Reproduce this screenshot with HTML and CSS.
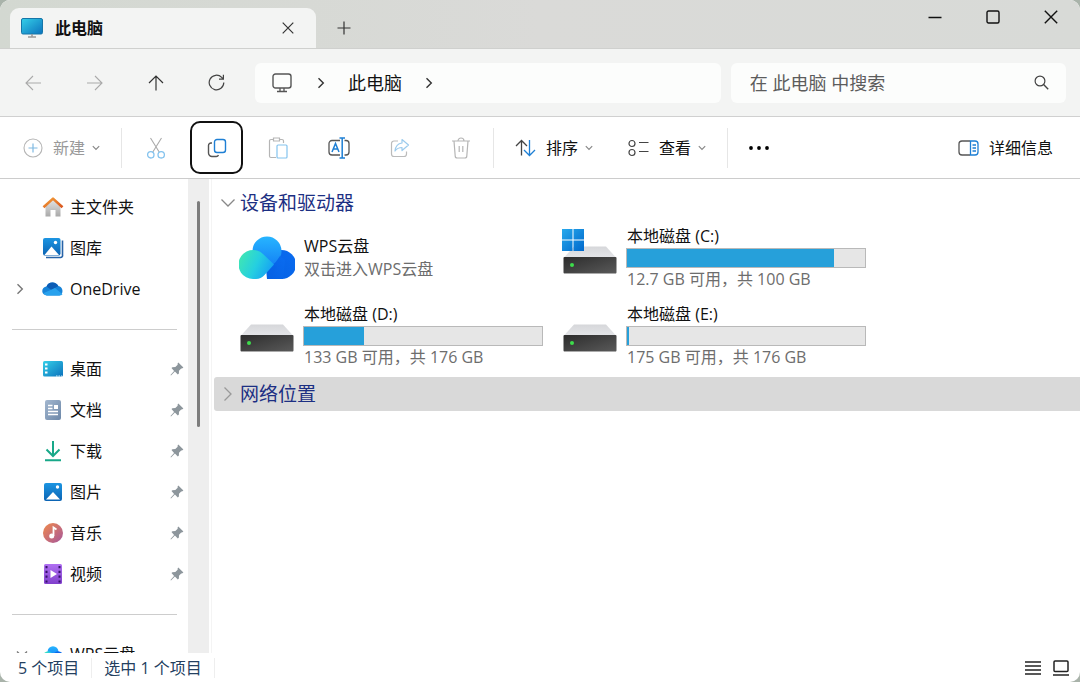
FILE: index.html
```html
<!DOCTYPE html>
<html lang="zh-CN">
<head>
<meta charset="utf-8">
<meta name="viewport" content="width=device-width, initial-scale=1">
<title>此电脑</title>
<link rel="stylesheet" href="styles.css">
</head>
<body>
<svg class="defs" aria-hidden="true">
  <defs>
    <linearGradient id="screen" x1="0" y1="0" x2="1" y2="1"><stop offset="0" stop-color="#35d0e8"/><stop offset="1" stop-color="#0c72bd"/></linearGradient>
    <linearGradient id="roof" x1="0" y1="0" x2="1" y2="1"><stop offset="0" stop-color="#f4a13a"/><stop offset="1" stop-color="#d9541e"/></linearGradient>
    <linearGradient id="wall" x1="0" y1="0" x2="0" y2="1"><stop offset="0" stop-color="#e6e6e6"/><stop offset="1" stop-color="#a9a9a9"/></linearGradient>
    <linearGradient id="photo" x1="0" y1="0" x2="0" y2="1"><stop offset="0" stop-color="#1c95e2"/><stop offset="1" stop-color="#0b63b3"/></linearGradient>
    <linearGradient id="paper" x1="0" y1="0" x2="1" y2="1"><stop offset="0" stop-color="#a3b7cf"/><stop offset="1" stop-color="#6c87a8"/></linearGradient>
    <linearGradient id="disc" x1="0" y1="0" x2="1" y2="1"><stop offset="0" stop-color="#f08a4b"/><stop offset="1" stop-color="#a6569c"/></linearGradient>
    <linearGradient id="film" x1="0" y1="0" x2="0" y2="1"><stop offset="0" stop-color="#b070f2"/><stop offset="1" stop-color="#8140cc"/></linearGradient>
    <linearGradient id="cloud-top" x1="0" y1="0" x2="0" y2="1"><stop offset="0" stop-color="#27b5ff"/><stop offset="1" stop-color="#1482f5"/></linearGradient>
    <linearGradient id="cloud-right" x1="1" y1="0" x2="0" y2="1"><stop offset="0" stop-color="#0a6cf0"/><stop offset="1" stop-color="#0560e4"/></linearGradient>
    <linearGradient id="cloud-left" x1="0" y1="0.3" x2="1" y2="0.7"><stop offset="0" stop-color="#3fe6b4"/><stop offset="0.500" stop-color="#25cfe0"/><stop offset="1" stop-color="#149cf6"/></linearGradient>
    <linearGradient id="drive-top" x1="0" y1="0" x2="0" y2="1"><stop offset="0" stop-color="#d6d7da"/><stop offset="1" stop-color="#e4e5e8"/></linearGradient>
    <linearGradient id="drive-front" x1="0" y1="0" x2="1" y2="1"><stop offset="0" stop-color="#2c2c2c"/><stop offset="1" stop-color="#5a5a5a"/></linearGradient>
    <linearGradient id="win" x1="0" y1="0" x2="1" y2="1"><stop offset="0" stop-color="#27a9ec"/><stop offset="1" stop-color="#0068cc"/></linearGradient>
    <symbol id="pin" viewBox="0 0 14 14"><path d="M8.3.6 13.4 5.6 12 6.6 11.2 6.4 9 8.8 8.9 11.6 7.8 12.4 4.9 9.6 1 13.4.5 13 4.1 8.9 1.5 6.1 2.4 5.2 5.3 5 7.7 2.8 7.5 1.7z" fill="#8d969c"/></symbol>
    <symbol id="chevron-down" viewBox="0 0 8 6"><path d="M.8 1.2 4 4.4 7.2 1.2" fill="none" stroke="currentColor" stroke-width="1.200"/></symbol>
    <symbol id="chevron-right" viewBox="0 0 8 12"><path d="M1.5 1.2 6.3 6 1.5 10.8" fill="none" stroke="currentColor" stroke-width="1.4"/></symbol>
    <symbol id="drive" viewBox="0 0 56 46"><path d="M12 17.500H44L54 28.500H2z" fill="url(#drive-top)"/><rect x="1.500" y="28" width="53" height="16.500" rx="1" fill="url(#drive-front)"/><path d="M2 44.500H54" stroke="#aaa"/><circle cx="10" cy="36" r="2" fill="#3ddc4b"/></symbol>
  </defs>
</svg>
<div class="window">
  <header class="titlebar">
    <div class="tab">
      <svg width="22" height="20" viewBox="0 0 22 20"><rect x=".5" y=".5" width="21" height="15.500" rx="1.500" fill="url(#screen)" stroke="#1676a8"/><path d="M11 16V18.500M7 19H15" stroke="#999" stroke-width="1.500"/></svg>
      <span class="tab-title">此电脑</span>
      <button class="tab-close" aria-label="关闭标签页"><svg width="12" height="12" viewBox="0 0 12 12"><path d="M.7.7 11.300 11.300M11.300.7.7 11.300" stroke="#333" stroke-width="1.200"/></svg></button>
    </div>
    <button class="tab-add" aria-label="新标签页"><svg width="14" height="14" viewBox="0 0 14 14"><path d="M7 .5V13.500M.5 7H13.500" stroke="#333" stroke-width="1.200"/></svg></button>
    <div class="window-controls">
      <button aria-label="最小化"><svg width="14" height="14" viewBox="0 0 14 14"><path d="M.5 7.500H13.500" stroke="#111" stroke-width="1.500"/></svg></button>
      <button aria-label="最大化"><svg width="14" height="14" viewBox="0 0 14 14"><rect x="1" y="1" width="12" height="12" rx="1.500" fill="none" stroke="#111" stroke-width="1.400"/></svg></button>
      <button aria-label="关闭"><svg width="14" height="14" viewBox="0 0 14 14"><path d="M.8.8 13.200 13.200M13.200.8.8 13.200" stroke="#111" stroke-width="1.400"/></svg></button>
    </div>
  </header>

  <nav class="navbar" aria-label="导航">
    <div class="nav-buttons">
      <button class="square" disabled aria-label="后退"><svg width="17" height="16" viewBox="0 0 17 16"><path d="M16 8H1.500M8 1 1 8 8 15" fill="none" stroke="#aaa" stroke-width="1.100"/></svg></button>
      <button class="square" disabled aria-label="前进"><svg width="17" height="16" viewBox="0 0 17 16"><path d="M1 8H15.500M9 1 16 8 9 15" fill="none" stroke="#aaa" stroke-width="1.100"/></svg></button>
      <button class="square" aria-label="向上"><svg width="16" height="16" viewBox="0 0 16 16"><path d="M8 15.500V1.500M1 8 8 1 15 8" fill="none" stroke="#333" stroke-width="1.200"/></svg></button>
      <button class="square" aria-label="刷新"><svg width="17" height="17" viewBox="0 0 17 17"><path d="M15.800 8.500A7.300 7.300 0 1 1 13.700 3.400L15.200 5M15.400.8V5.200H11" fill="none" stroke="#444" stroke-width="1.200"/></svg></button>
    </div>
    <div class="address">
      <svg width="20" height="20" viewBox="0 0 20 20"><rect x="1" y="1" width="18" height="14" rx="2.500" fill="none" stroke="#555" stroke-width="1.400"/><path d="M8 15V18M12 15V18M5 18.500H15" stroke="#555" stroke-width="1.300"/></svg>
      <svg class="crumb" width="8" height="12"><use href="#chevron-right"/></svg>
      <a class="crumb-link" href="#">此电脑</a>
      <svg class="crumb" width="8" height="12"><use href="#chevron-right"/></svg>
    </div>
    <label class="search">
      <input type="search" placeholder="在 此电脑 中搜索" aria-label="在 此电脑 中搜索">
      <svg width="15" height="15" viewBox="0 0 15 15"><circle cx="6" cy="6" r="4.900" fill="none" stroke="#444" stroke-width="1.200"/><path d="M9.600 9.600 14.200 14.200" stroke="#444" stroke-width="1.400"/></svg>
    </label>
  </nav>

  <div class="toolbar" role="toolbar" aria-label="命令">
    <button class="command muted" disabled>
      <svg width="20" height="20" viewBox="0 0 20 20" fill="none"><circle cx="10" cy="10" r="9" stroke="#b5b5b5" stroke-width="1.100"/><path d="M10 5.500V14.500M5.500 10H14.500" stroke="#7fb9e2" stroke-width="1.200"/></svg>
      <span>新建</span><svg class="drop" width="8" height="6"><use href="#chevron-down"/></svg>
    </button>
    <span class="separator"></span>
    <div class="icon-commands">
      <button class="square" disabled aria-label="剪切"><svg width="20" height="22" viewBox="0 0 20 22" fill="none"><path d="M4.500 1 13.200 15M15.500 1 6.800 15" stroke="#aaa" stroke-width="1.100"/><circle cx="4.800" cy="17.800" r="3.200" stroke="#84c3ee" stroke-width="1.300"/><circle cx="15.200" cy="17.800" r="3.200" stroke="#84c3ee" stroke-width="1.300"/></svg></button>
      <button class="square focused" aria-label="复制"><svg width="20" height="20" viewBox="0 0 20 20" fill="none"><rect x="7.500" y="1.500" width="11" height="13" rx="2.500" stroke="#1e7fd4" stroke-width="1.400"/><path d="M5 5H4A2.500 2.500 0 0 0 1.500 7.500V15A3.500 3.500 0 0 0 5 18.500H9A2.500 2.500 0 0 0 11.500 17" stroke="#555" stroke-width="1.400"/></svg></button>
      <button class="square" disabled aria-label="粘贴"><svg width="20" height="22" viewBox="0 0 20 22" fill="none"><path d="M8 20.500H3A1.500 1.500 0 0 1 1.500 19V4A1.500 1.500 0 0 1 3 2.500H5M12 2.500H14A1.500 1.500 0 0 1 15.500 4V6M5.500 1H11.500V4H5.500z" stroke="#b5b5b5" stroke-width="1.200"/><rect x="9" y="8" width="10" height="13" rx="1" stroke="#84c3ee" stroke-width="1.200"/></svg></button>
      <button class="square" aria-label="重命名"><svg width="22" height="22" viewBox="0 0 22 22" fill="none"><path d="M12 3.500H4A3 3 0 0 0 1 6.500V15A3 3 0 0 0 4 18H12M16.500 3.500H18A3 3 0 0 1 21 6.500V15A3 3 0 0 1 18 18H16.500" stroke="#555" stroke-width="1.300"/><path d="M4 15 7.500 6.500 11 15M5.300 12H9.700M14.200 1V21M11.500 1H17M11.500 21H17" stroke="#1e7fd4" stroke-width="1.500"/></svg></button>
      <button class="square" disabled aria-label="共享"><svg width="20" height="20" viewBox="0 0 20 20" fill="none"><path d="M8 3H4A2.500 2.500 0 0 0 1.500 5.500V16A2.500 2.500 0 0 0 4 18.500H14A2.500 2.500 0 0 0 16.500 16V13.500" stroke="#bbb" stroke-width="1.200"/><path d="M12 1.500 18.500 7 12 12.500V9.500C8.500 9.500 6.500 11 5 13 5.500 8.500 7.500 5.500 12 5z" stroke="#9ccbed" stroke-width="1.200" stroke-linejoin="round"/></svg></button>
      <button class="square" disabled aria-label="删除"><svg width="20" height="22" viewBox="0 0 20 22" fill="none" stroke="#b5b5b5" stroke-width="1.200"><path d="M1 4H19M7 4A3 3 0 0 1 13 4M3 4 4.200 19A2 2 0 0 0 6.200 21H13.800A2 2 0 0 0 15.800 19L17 4M8.200 9V15M11.800 9V15"/></svg></button>
    </div>
    <span class="separator"></span>
    <div class="text-commands">
      <button class="command">
        <svg width="21" height="18" viewBox="0 0 21 18" fill="none" stroke-width="1.300"><path d="M6.500 16.500V1.500M1 7 6.500 1.500 12 7" stroke="#444"/><path d="M14.500 1V16.500M9 11 14.500 16.500 20 11" stroke="#1e7fd4"/></svg>
        <span>排序</span><svg class="drop" width="8" height="6"><use href="#chevron-down"/></svg>
      </button>
      <button class="command">
        <svg width="21" height="18" viewBox="0 0 21 18" fill="none" stroke="#444" stroke-width="1.200"><circle cx="4" cy="4.500" r="3"/><circle cx="4" cy="13.500" r="3"/><path d="M11 3.500H20.500M11 12.500H20.500"/></svg>
        <span>查看</span><svg class="drop" width="8" height="6"><use href="#chevron-down"/></svg>
      </button>
    </div>
    <span class="separator"></span>
    <button class="more" aria-label="查看更多"><svg width="22" height="6" viewBox="0 0 22 6"><circle cx="3" cy="3" r="1.900"/><circle cx="11" cy="3" r="1.900"/><circle cx="19" cy="3" r="1.900"/></svg></button>
    <button class="command details">
      <svg width="21" height="16" viewBox="0 0 21 16" fill="none" stroke-width="1.300"><path d="M12 1H4A3 3 0 0 0 1 4V12A3 3 0 0 0 4 15H12" stroke="#555"/><path d="M12.500 1H17A3 3 0 0 1 20 4V12A3 3 0 0 1 17 15H12.500zM14.500 5H18M14.500 8H18M14.500 11H18" stroke="#1e7fd4"/></svg>
      <span>详细信息</span>
    </button>
  </div>

  <div class="content">
    <aside class="sidebar">
      <ul class="places">
        <li><a href="#"><svg class="icon" width="22" height="22" viewBox="0 0 22 22"><path d="M3.500 9 11 3 18.500 9V20.500H13.500V14H8.500V20.500H3.500z" fill="url(#wall)"/><path d="M1.500 11.200 11 2.600 20.500 11.200" fill="none" stroke="url(#roof)" stroke-width="2.600" stroke-linejoin="round"/></svg><span>主文件夹</span></a></li>
        <li><a href="#"><svg class="icon" width="22" height="22" viewBox="0 0 22 22"><path d="M20.500 3.500V18A2 2 0 0 1 18.500 20.500H4" fill="none" stroke="#2763a8" stroke-width="1.600"/><rect x="1" y="1" width="17.500" height="17.500" rx="2" fill="url(#photo)"/><path d="M2.500 18 9.500 9.500 17 18z" fill="#fff"/><circle cx="13.500" cy="5.500" r="1.700" fill="#fff"/></svg><span>图库</span></a></li>
        <li><a href="#"><svg class="expand" width="8" height="12"><use href="#chevron-right"/></svg><svg class="icon" width="22" height="16" viewBox="0 0 22 16"><path d="M5 14.500A4.500 4.500 0 0 1 4.500 5.500 6.500 6.500 0 0 1 16.300 5 5 5 0 0 1 17.500 14.500z" fill="#1683d8"/><path d="M4.500 5.500A6.500 6.500 0 0 1 16.300 5L9.500 9z" fill="#0c5cb5"/><path d="M5 14.500Q2.500 14.300 1.300 12.300L13 7 20.500 13.200Q19.500 14.400 17.500 14.500z" fill="#28a1ed"/></svg><span>OneDrive</span></a></li>
      </ul>
      <hr>
      <ul class="places">
        <li><a href="#"><svg class="icon" width="22" height="18" viewBox="0 0 22 18"><rect x="1" y="1" width="20" height="15.500" rx="1.500" fill="url(#screen)"/><path d="M3 4.500H5.500M3 8.500H5.500M3 12.500H5.500" stroke="#fff" stroke-width="1.800"/><path d="M14 16H20" stroke="#d5f4fa" stroke-dasharray="1.500 1"/></svg><span>桌面</span><svg class="pin" width="14" height="14"><use href="#pin"/></svg></a></li>
        <li><a href="#"><svg class="icon" width="22" height="22" viewBox="0 0 22 22"><rect x="3" y="1" width="16" height="20" rx="2" fill="url(#paper)"/><path d="M6 6.500H10.500M6 9.500H10.500M6 12.500H16M6 15.500H16" stroke="#fff" stroke-width="1.500"/><rect x="12" y="6" width="4" height="4" fill="#fff"/></svg><span>文档</span><svg class="pin" width="14" height="14"><use href="#pin"/></svg></a></li>
        <li><a href="#"><svg class="icon" width="22" height="22" viewBox="0 0 22 22"><path d="M11 1V16M4.500 9.500 11 16 17.500 9.500M3 20.200H19" fill="none" stroke="#18a889" stroke-width="2"/></svg><span>下载</span><svg class="pin" width="14" height="14"><use href="#pin"/></svg></a></li>
        <li><a href="#"><svg class="icon" width="22" height="20" viewBox="0 0 22 20"><rect x="2" y="1" width="18" height="18" rx="2" fill="url(#photo)"/><path d="M4 17.500 11 10 18 17.500z" fill="#fff"/><circle cx="15.500" cy="5" r="1.700" fill="#fff"/></svg><span>图片</span><svg class="pin" width="14" height="14"><use href="#pin"/></svg></a></li>
        <li><a href="#"><svg class="icon" width="22" height="22" viewBox="0 0 22 22"><circle cx="11" cy="11" r="10" fill="url(#disc)"/><path d="M11.500 14V5.500L14.500 7.500" fill="none" stroke="#fff" stroke-width="1.800"/><circle cx="9.700" cy="14" r="2.500" fill="#fff"/></svg><span>音乐</span><svg class="pin" width="14" height="14"><use href="#pin"/></svg></a></li>
        <li><a href="#"><svg class="icon" width="22" height="22" viewBox="0 0 22 22"><rect x="2" y="1" width="18" height="20" rx="1.500" fill="url(#film)"/><path d="M4.500 3V20M17.500 3V20" stroke="#35106b" stroke-width="2" stroke-dasharray="2.200 2.600"/><path d="M8.500 7 15 11 8.500 15z" fill="#fff"/></svg><span>视频</span><svg class="pin" width="14" height="14"><use href="#pin"/></svg></a></li>
      </ul>
      <hr>
      <ul class="places">
        <li><a href="#"><svg class="expand" width="12" height="8" viewBox="0 0 12 8"><path d="M1 1.500 6 6.500 11 1.500" fill="none" stroke="#777" stroke-width="1.400"/></svg><svg class="icon" width="22" height="16" viewBox="0 0 56 43"><circle cx="28" cy="15" r="14.500" fill="url(#cloud-top)"/><circle cx="42" cy="28" r="14" fill="url(#cloud-right)"/><circle cx="15" cy="28" r="14" fill="url(#cloud-left)"/></svg><span>WPS云盘</span></a></li>
      </ul>
    </aside>
    <div class="scroll-track"><div class="scroll-thumb"></div></div>

    <main class="main">
      <button class="group-header" aria-expanded="true"><svg width="16" height="10" viewBox="0 0 16 10"><path d="M1.500 1.500 8 8 14.500 1.500" fill="none" stroke="#888" stroke-width="1.300"/></svg><span>设备和驱动器</span></button>
      <div class="drives">
        <a class="drive" href="#">
          <svg width="56" height="46" viewBox="0 0 56 46"><g transform="translate(0 1)"><path d="M28 43H42.500A14 14 0 0 0 42.500 14Q34 14 26 23z" fill="url(#cloud-right)"/><circle cx="28" cy="15" r="14.500" fill="url(#cloud-top)"/><path d="M30 43 38 31 35 28.500 41 20 46 24 44 43z" fill="url(#cloud-right)"/><path d="M14 43A14.500 14.500 0 1 1 24 18L35 28.500 25.500 39Q22 43 17 43z" fill="url(#cloud-left)"/></g></svg>
          <span class="drive-info"><span class="drive-name">WPS云盘</span><span class="drive-note">双击进入WPS云盘</span></span>
        </a>
        <a class="drive" href="#">
          <svg class="drive-icon" width="56" height="46" viewBox="0 0 56 46"><use href="#drive"/><path d="M0 0H10.500V10.500H0zM11.500 0H22V10.500H11.500zM0 11.500H10.500V22H0zM11.500 11.500H22V22H11.500z" fill="url(#win)"/></svg>
          <span class="drive-info"><span class="drive-name">本地磁盘 (C:)</span><span class="bar"><span class="bar-fill" style="width:87%"></span></span><span class="drive-note">12.7 GB 可用，共 100 GB</span></span>
        </a>
        <a class="drive" href="#">
          <svg class="drive-icon" width="56" height="46"><use href="#drive"/></svg>
          <span class="drive-info"><span class="drive-name">本地磁盘 (D:)</span><span class="bar"><span class="bar-fill" style="width:25%"></span></span><span class="drive-note">133 GB 可用，共 176 GB</span></span>
        </a>
        <a class="drive" href="#">
          <svg class="drive-icon" width="56" height="46"><use href="#drive"/></svg>
          <span class="drive-info"><span class="drive-name">本地磁盘 (E:)</span><span class="bar"><span class="bar-fill" style="width:0.6%"></span></span><span class="drive-note">175 GB 可用，共 176 GB</span></span>
        </a>
      </div>
      <button class="group-header selected" aria-expanded="false"><svg width="16" height="16" viewBox="0 0 16 16"><path d="M4.500 1.500 11 8 4.500 14.500" fill="none" stroke="#999" stroke-width="1.300"/></svg><span>网络位置</span></button>
    </main>
  </div>

  <footer class="statusbar">
    <span>5 个项目</span>
    <span class="status-separator"></span>
    <span>选中 1 个项目</span>
    <span class="status-separator"></span>
    <div class="view-modes">
      <button aria-label="详细信息视图"><svg width="16" height="16" viewBox="0 0 16 16"><path d="M0 2H16M0 6H16M0 10H16M0 14H16" stroke="#222" stroke-width="1.400"/></svg></button>
      <button aria-label="大图标视图"><svg width="16" height="16" viewBox="0 0 16 16"><rect x="1" y="1" width="14" height="10.500" rx="1" fill="none" stroke="#222" stroke-width="1.500"/><path d="M0 15H16" stroke="#222" stroke-width="1.600"/></svg></button>
    </div>
  </footer>
</div>
</body>
</html>
```
FILE: styles.css
```css
* { box-sizing: border-box; }

body {
  margin: 0;
  background: #a9b3aa;
  color: #111;
  font: 16px/24px "Open Sans", "Noto Sans CJK SC", sans-serif;
}

button {
  display: flex;
  align-items: center;
  justify-content: center;
  padding: 0;
  border: 0;
  background: none;
  color: inherit;
  font: inherit;
}

a { color: inherit; text-decoration: none; }
svg { flex: none; display: block; }
.defs { position: absolute; width: 0; height: 0; }

.window {
  display: flex;
  flex-direction: column;
  height: 100vh;
  overflow: hidden;
  border-radius: 10px;
  background: #fff;
}

/* Title bar */
.titlebar {
  display: flex;
  flex: none;
  height: 49px;
  padding-left: 10px;
  border-bottom: 1px solid #cfd0ce;
  background: linear-gradient(90deg, #d3d8d1, #dadad8 50%, #d8dad7);
}
.tab {
  display: flex;
  align-items: center;
  width: 306px;
  margin-top: 8px;
  padding: 0 22px 0 11px;
  border-radius: 9px 9px 0 0;
  background: #f3f4f3;
}
.tab-title { margin-left: 12px; font-weight: 700; }
.tab-close { margin-left: auto; }
.tab-add { width: 28px; margin: 8px 0 0 14px; }
.window-controls { display: flex; margin-left: auto; }
.window-controls button { width: 58px; height: 33px; }

/* Navigation */
.navbar {
  display: flex;
  flex: none;
  align-items: center;
  height: 68px;
  padding: 0 14px 0 7px;
  border-bottom: 1px solid #d0d0d0;
  background: #f3f4f3;
  font-size: 18px;
}
.nav-buttons, .icon-commands { display: flex; gap: 8px; }
.square { width: 53px; height: 53px; border-radius: 10px; }
.address, .search {
  display: flex;
  align-items: center;
  height: 40px;
  border-radius: 6px;
  background: #fcfdfc;
}
.address { flex: 3 1 0; margin-left: 12px; padding-left: 17px; }
.crumb { margin-left: 25px; color: #333; }
.crumb-link { margin-left: 23px; }
.crumb-link + .crumb { margin-left: 23px; }
.search { flex: 2 1 0; margin-left: 10px; padding: 0 17px 0 19px; }
.search input {
  flex: 1;
  min-width: 0;
  padding: 0;
  border: 0;
  outline: 0;
  background: none;
  font: inherit;
}
.search input::placeholder { color: #5c5c5c; opacity: 1; }

/* Commands */
.toolbar {
  display: flex;
  flex: none;
  align-items: center;
  height: 62px;
  padding: 0 27px 0 23px;
  border-bottom: 1px solid #ccc;
}
.command span { margin-left: 10px; }
.muted { color: #999; }
.drop { margin-left: 7px; color: #888; }
.separator { width: 1px; height: 40px; margin-left: 21px; background: #e6e6e6; }
.icon-commands { margin-left: 7px; }
.icon-commands + .separator { margin-left: 6px; }
.focused { border: 2px solid #111; }
.text-commands { display: flex; gap: 35px; margin-left: 21px; }
.more { margin-left: 20px; }
.details { margin-left: auto; }

/* Body */
.content { display: flex; flex: 1; min-height: 0; }
.sidebar { width: 188px; flex: none; overflow: hidden; padding-top: 7px; }
.places { margin: 0; padding: 0; list-style: none; }
.places a {
  display: grid;
  grid-template-columns: 12px 22px 1fr 14px;
  align-items: center;
  height: 41px;
  padding: 0 4px 0 16px;
}
.places .expand { grid-column: 1; grid-row: 1; color: #777; }
.places .icon { grid-column: 2; grid-row: 1; margin-left: 14px; }
.places span { grid-column: 3; grid-row: 1; margin-left: 20px; }
.places .pin { grid-column: 4; grid-row: 1; }
.sidebar hr {
  height: 1px;
  margin: 20px 11px 18px 12px;
  border: 0;
  background: #cdcdcd;
}
.scroll-track {
  flex: none;
  width: 21px;
  padding: 22px 9px 0;
  background: #eee;
}
.scroll-thumb { width: 3px; height: 226px; border-radius: 2px; background: #7d7d7d; }

.main {
  flex: 1;
  min-width: 0;
  margin-left: 2px;
  padding: 8px 0 0 2px;
  border-left: 1px solid #f4f4f4;
}
.group-header {
  justify-content: flex-start;
  gap: 4px;
  width: 100%;
  height: 32px;
  padding-left: 6px;
  color: #1c2f83;
  font-size: 19px;
}
.selected { height: 34px; margin-top: 2px; border-radius: 3px 0 0 3px; background: #d9d9d9; }
.drives {
  display: grid;
  grid-template-columns: repeat(auto-fill, 304px);
  gap: 0 19px;
  max-width: 660px;
  padding-left: 25px;
}
.drive { display: flex; gap: 8px; align-items: center; height: 78px; }
.drive-icon { margin-bottom: 12px; }
.drive-info { display: flex; flex: 1; flex-direction: column; }
.drive-name, .drive-note { padding-left: 1px; line-height: 23px; }
.drive-note { color: #6d6d6d; }
.bar { height: 20px; border: 1px solid #b9b9b9; background: #e6e6e6; }
.bar-fill { display: block; min-width: 2px; height: 100%; background: #26a0da; }

/* Status */
.statusbar {
  display: flex;
  flex: none;
  align-items: center;
  height: 29px;
  padding: 0 11px 0 18px;
  color: #24405f;
}
.status-separator { width: 1px; height: 20px; margin: 0 12px; background: #eee; }
.view-modes { display: flex; gap: 12px; margin-left: auto; }
```
